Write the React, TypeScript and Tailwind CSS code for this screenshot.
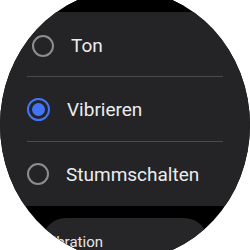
const font = { fontFamily: "Roboto, 'Noto Sans', sans-serif" };

type Option = { label: string; selected?: boolean; shift?: boolean };

const options: Option[] = [
  { label: "Ton", shift: true },
  { label: "Vibrieren", selected: true },
  { label: "Stummschalten" },
];

const Radio = ({ selected }: { selected?: boolean }) =>
  selected ? (
    <span className="flex h-[23px] w-[23px] shrink-0 items-center justify-center rounded-full border-[2.5px] border-[#4474f6]">
      <span className="h-[13px] w-[13px] rounded-full bg-[#4474f6]" />
    </span>
  ) : (
    <span className="h-[22px] w-[22px] shrink-0 rounded-full border-2 border-[#8d8d8f]" />
  );

const Row = ({ option }: { option: Option }) => (
  <div
    className={`flex h-[64px] items-center gap-[17px] ${
      option.shift ? "pl-[32px] pt-[3px]" : "pl-[27px]"
    }`}
  >
    <Radio selected={option.selected} />
    <span className="text-[19px] leading-none text-[#ececee]">{option.label}</span>
  </div>
);

export default function App() {
  return (
    <div className="h-[250px] w-[250px] overflow-hidden bg-white" style={font}>
      {/* watch face: slightly taller than the crop, so the top and bottom are cut */}
      <div className="relative mt-[-10px] h-[270px] w-[250px] overflow-hidden rounded-[50%] bg-black">
        <div className="absolute left-[58px] top-[-2px] h-[24px] w-[134px] rounded-[50%] bg-black" />
        <div className="flex flex-col pt-[22px]">
          <div className="bg-[#242426]">
            {options.map((o, i) => (
              <div key={o.label}>
                {i > 0 && <div className="mx-[27px] h-px bg-[#4a4a4c]" />}
                <Row option={o} />
              </div>
            ))}
          </div>
          <div className="mx-[42px] mt-[12px] h-[50px] rounded-t-[24px] bg-[#262628] pl-[1px] pt-[12px]">
            <span className="text-[15px] text-[#e6e6e8]">Vibration</span>
          </div>
        </div>
      </div>
    </div>
  );
}
